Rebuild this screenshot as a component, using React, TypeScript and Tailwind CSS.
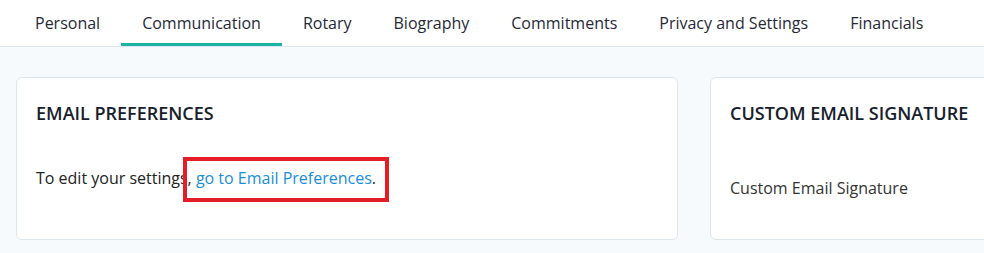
const tabs = [
  "Personal",
  "Communication",
  "Rotary",
  "Biography",
  "Commitments",
  "Privacy and Settings",
  "Financials",
];

function Tabs() {
  return (
    <nav className="flex h-[47px] border-b border-[#dde6ee] bg-white pl-[14px]">
      {tabs.map((t) => (
        <div
          key={t}
          className={
            t === "Communication"
              ? "flex h-full items-center border-b-[3px] border-[#1ab3a6] px-[21px] pt-[3px] text-[16px] text-[#1f2937]"
              : "flex h-full items-center border-b-[3px] border-transparent px-[21px] pt-[3px] text-[16px] text-[#1f2937]"
          }
        >
          {t}
        </div>
      ))}
    </nav>
  );
}

export default function App() {
  return (
    <div
      className="h-[253px] w-[984px] overflow-hidden bg-[#f6fafd]"
      style={{ fontFamily: '"Open Sans", sans-serif' }}
    >
      <Tabs />
      <div className="flex gap-[32px] pl-[16px] pt-[30px]">
        <section className="h-[163px] w-[662px] shrink-0 rounded-[6px] border border-[#dde5ed] bg-white px-[19px] pt-[23px]">
          <h2 className="text-[18px] font-semibold leading-[24px] text-[#16202c]">
            EMAIL PREFERENCES
          </h2>
          <p className="relative mt-[41px] text-[16px] leading-[24px] text-[#222]">
            To edit your settings,{" "}
            <span className="text-[#1a8ed8]">go to Email Preferences</span>.
            <span className="pointer-events-none absolute left-[147px] top-[-9px] h-[45px] w-[206px] border-[4px] border-[#e41e26]" />
          </p>
        </section>
        <section className="h-[163px] w-[320px] shrink-0 rounded-[6px] border border-[#dde5ed] bg-white px-[19px] pt-[23px]">
          <h2 className="text-[18px] font-semibold leading-[24px] text-[#16202c]">
            CUSTOM EMAIL SIGNATURE
          </h2>
          <p className="mt-[51px] text-[16px] leading-[24px] text-[#333]">
            Custom Email Signature
          </p>
        </section>
      </div>
    </div>
  );
}
